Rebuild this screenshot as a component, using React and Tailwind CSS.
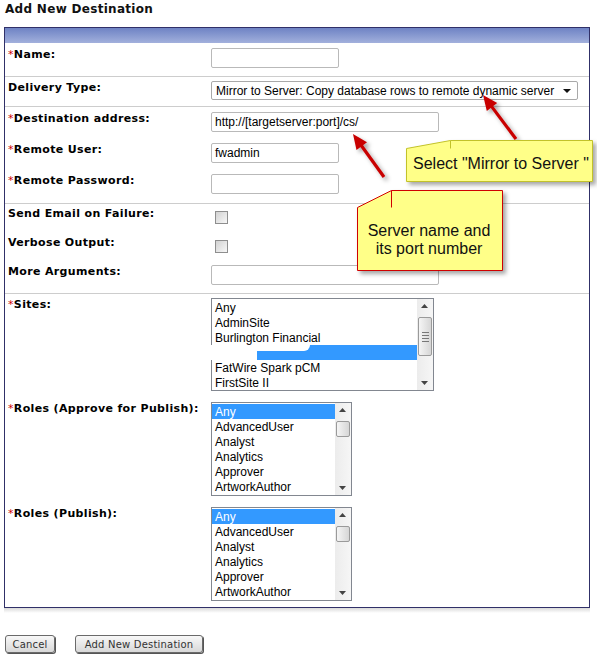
import React from "react";

const labelFont = "font-['DejaVu_Sans',Verdana,sans-serif]";

function Label({ children, req }) {
  return (
    <div className={`w-[206px] shrink-0 pl-[3px] text-[11px] leading-[13px] font-bold tracking-[0.35px] text-black ${labelFont}`}>
      {req && <span className="text-[#d00000] font-normal">*</span>}
      {children}
    </div>
  );
}

function TextInput({ w, value }) {
  return (
    <div className={`h-[20px] border border-[#b9b9b9] rounded-[2px] bg-white pl-[3px] text-[12px] leading-[19px] text-black ${w}`}>
      {value}
    </div>
  );
}

function Checkbox() {
  return (
    <div className="mt-[4px] ml-[4px] w-[13px] h-[13px] border border-[#8e8e8e] bg-gradient-to-br from-[#d2d2d2] to-[#f7f7f7]" />
  );
}

function ScrollBar({ thumbTop, thumbH, grip }) {
  return (
    <div className="relative w-[16px] h-full bg-gradient-to-r from-[#ececec] to-[#f6f6f6]">
      <svg className="absolute left-[4px] top-[5px]" width="7" height="4" viewBox="0 0 7 4">
        <path d="M0 4 L3.5 0 L7 4 Z" fill="#444" />
      </svg>
      <div
        className="absolute left-[1px] w-[14px] rounded-[2px] border border-[#9a9a9a] bg-gradient-to-r from-[#f5f5f5] to-[#d6d6d6] flex flex-col items-center justify-center gap-[2px]"
        style={{ top: thumbTop, height: thumbH }}
      >
        {grip && (
          <>
            <div className="w-[7px] h-px bg-[#777]" />
            <div className="w-[7px] h-px bg-[#777]" />
            <div className="w-[7px] h-px bg-[#777]" />
            <div className="w-[7px] h-px bg-[#777]" />
          </>
        )}
      </div>
      <svg className="absolute left-[4px] bottom-[5px]" width="7" height="4" viewBox="0 0 7 4">
        <path d="M0 0 L7 0 L3.5 4 Z" fill="#444" />
      </svg>
    </div>
  );
}

function ListBox({ size, items, sel, thumbTop, thumbH, grip, redact }) {
  return (
    <div className={`flex border border-[#828790] bg-white ${size}`}>
      <div className="flex-1 pt-[1px]">
        {items.map((it, i) => (
          <div
            key={i}
            className={`relative h-[15px] pl-[3px] pt-[1px] text-[12px] leading-[15px] whitespace-nowrap ${
              i === sel ? "bg-[#3399ff] text-white" : "text-black"
            }`}
          >
            {it}
            {redact && i === sel && (
              <>
                <div className="absolute left-[-2px] top-0 w-[47px] h-[15px] bg-white" />
                <div className="absolute left-[44px] top-0 w-[54px] h-[6px] bg-white rounded-br-[6px]" />
              </>
            )}
          </div>
        ))}
      </div>
      <ScrollBar thumbTop={thumbTop} thumbH={thumbH} grip={grip} />
    </div>
  );
}

function arrowParts(x1, y1, x2, y2) {
  const a = Math.atan2(y2 - y1, x2 - x1);
  const L = 15;
  const W = 6.5;
  const bx = x2 - L * Math.cos(a);
  const by = y2 - L * Math.sin(a);
  const head = `${x2},${y2} ${bx + W * Math.sin(a)},${by - W * Math.cos(a)} ${bx - W * Math.sin(a)},${by + W * Math.cos(a)}`;
  return { bx: x2 - (L - 3) * Math.cos(a), by: y2 - (L - 3) * Math.sin(a), head };
}

function Arrow({ x1, y1, x2, y2 }) {
  const p = arrowParts(x1, y1, x2, y2);
  return (
    <g filter="url(#shadow)">
      <line x1={x1} y1={y1} x2={p.bx} y2={p.by} stroke="#c80000" strokeWidth="3.2" />
      <polygon points={p.head} fill="#c80000" />
    </g>
  );
}

const roles = ["Any", "AdvancedUser", "Analyst", "Analytics", "Approver", "ArtworkAuthor"];

export default function App() {
  return (
    <div className="relative w-[597px] h-[659px] bg-white overflow-hidden font-['Liberation_Sans',Arial,sans-serif]">
      <div className={`h-[27px] pl-[5px] pt-[1px] text-[12px] leading-[16px] font-bold tracking-[0.3px] text-[#111] ${labelFont}`}>
        Add New Destination
      </div>

      {/* Form panel */}
      <div className="ml-[4px] w-[586px] border border-[#303068]">
        <div className="h-[15px] bg-gradient-to-b from-[#6f83c4] to-[#a2b0dc]" />

        <div className="h-[34px] pt-[5px] flex border-b border-[#cdcdcd]">
          <Label req>Name:</Label>
          <TextInput w="w-[128px]" />
        </div>

        <div className="h-[30px] pt-[4px] flex border-b border-[#cdcdcd]">
          <Label>Delivery Type:</Label>
          <div className="w-[367px] h-[19px] border border-[#a9a9a9] rounded-[2px] flex items-center justify-between pl-[4px] pr-[6px] text-[12px] text-black">
            <span>Mirror to Server: Copy database rows to remote dynamic server</span>
            <svg width="8" height="4" viewBox="0 0 8 4">
              <path d="M0 0 L8 0 L4 4 Z" fill="#111" />
            </svg>
          </div>
        </div>

        <div className="h-[97px] pt-[5px] border-b border-[#cdcdcd]">
          <div className="h-[31px] flex">
            <Label req>Destination address:</Label>
            <TextInput w="w-[228px]" value="http://[targetserver:port]/cs/" />
          </div>
          <div className="h-[31px] flex">
            <Label req>Remote User:</Label>
            <TextInput w="w-[128px]" value="fwadmin" />
          </div>
          <div className="h-[31px] flex">
            <Label req>Remote Password:</Label>
            <TextInput w="w-[128px]" />
          </div>
        </div>

        <div className="h-[90px] pt-[3px] border-b border-[#cdcdcd]">
          <div className="h-[29px] flex">
            <Label>Send Email on Failure:</Label>
            <Checkbox />
          </div>
          <div className="h-[29px] flex">
            <Label>Verbose Output:</Label>
            <Checkbox />
          </div>
          <div className="h-[29px] flex">
            <Label>More Arguments:</Label>
            <TextInput w="w-[228px]" />
          </div>
        </div>

        <div className="h-[313px] pt-[4px]">
          <div className="flex mb-[11px]">
            <Label req>Sites:</Label>
            <ListBox
              size="w-[223px] h-[93px]"
              items={["Any", "AdminSite", "Burlington Financial", "", "FatWire Spark pCM", "FirstSite II"]}
              sel={3}
              thumbTop={18}
              thumbH={39}
              grip
              redact
            />
          </div>
          <div className="flex mb-[11px]">
            <Label req>Roles (Approve for Publish):</Label>
            <ListBox size="w-[141px] h-[94px]" items={roles} sel={0} thumbTop={18} thumbH={16} />
          </div>
          <div className="flex">
            <Label req>Roles (Publish):</Label>
            <ListBox size="w-[141px] h-[94px]" items={roles} sel={0} thumbTop={18} thumbH={16} />
          </div>
        </div>
      </div>
      <div className="ml-[4px] w-[586px] h-[5px] bg-gradient-to-b from-[#dadada] to-white" />

      {/* Buttons */}
      <div className={`mt-[22px] pl-[5px] flex gap-[20px] text-[10px] tracking-[0.2px] text-[#333] ${labelFont}`}>
        <button className="w-[50px] h-[18px] rounded-[3px] border border-[#6a6a6a] bg-gradient-to-b from-[#f8f8f8] to-[#d8d8d8] shadow-[1px_1px_0_#555]">
          Cancel
        </button>
        <button className="w-[128px] h-[18px] rounded-[3px] border border-[#6a6a6a] bg-gradient-to-b from-[#f8f8f8] to-[#d8d8d8] shadow-[1px_1px_0_#555]">
          Add New Destination
        </button>
      </div>

      {/* Annotations */}
      <svg className="absolute left-0 top-0 pointer-events-none" width="597" height="659">
        <defs>
          <filter id="shadow" x="-20%" y="-20%" width="150%" height="160%">
            <feDropShadow dx="3" dy="3" stdDeviation="2" floodColor="#000" floodOpacity="0.35" />
          </filter>
        </defs>

        <Arrow x1={516} y1={139} x2={483} y2={95} />
        <Arrow x1={384} y1={177} x2={353} y2={134} />

        <g filter="url(#shadow)">
          <path d="M406.5 148.5 L450.5 140.5 L592.5 140.5 L592.5 181.5 L406.5 181.5 Z" fill="#ffff88" stroke="#c2c22a" />
        </g>
        <path d="M450.5 140.5 L450.5 148.5" stroke="#c2c22a" />
        <text x="413" y="169" fontFamily="Liberation Sans, Arial, sans-serif" fontSize="16" fill="#111">
          Select "Mirror to Server "
        </text>

        <g filter="url(#shadow)">
          <path d="M357.5 207.5 L391.5 190.5 L502.5 190.5 L502.5 270.5 L357.5 270.5 Z" fill="#ffff88" stroke="#d00000" />
        </g>
        <path d="M391.5 190.5 L391.5 207.5" stroke="#d00000" />
        <text x="429" y="236" textAnchor="middle" fontFamily="Liberation Sans, Arial, sans-serif" fontSize="16" fill="#111">
          Server name and
        </text>
        <text x="429" y="254" textAnchor="middle" fontFamily="Liberation Sans, Arial, sans-serif" fontSize="16" fill="#111">
          its port number
        </text>
      </svg>
    </div>
  );
}
